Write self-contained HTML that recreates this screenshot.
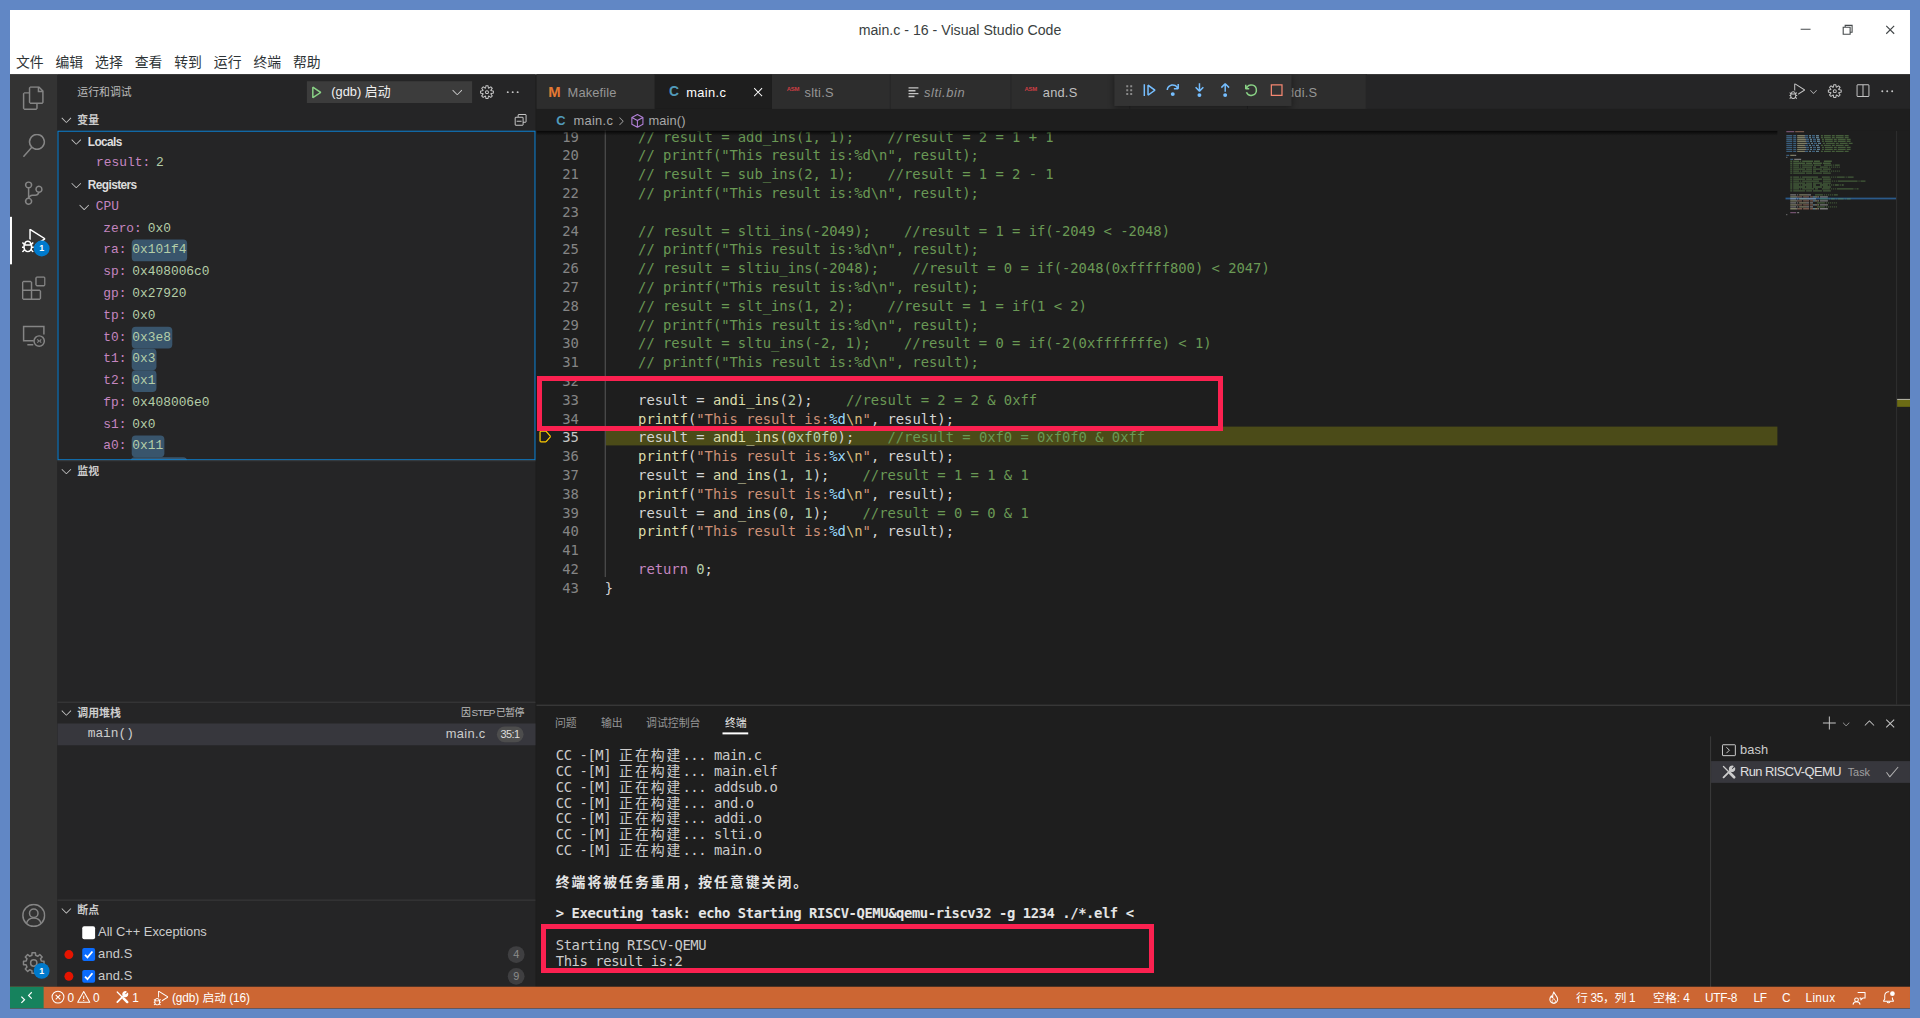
<!DOCTYPE html>
<html lang="zh-CN">
<head>
<meta charset="utf-8">
<title>main.c - 16 - Visual Studio Code</title>
<style>
*{box-sizing:border-box;margin:0;padding:0}
html,body{width:1920px;height:1018px;overflow:hidden;background:#6187c5}
body{position:relative;font-family:"Liberation Sans","Noto Sans CJK SC",sans-serif;font-size:13px;color:#ccc}
#win{position:absolute;left:10px;top:10px;width:1920px;height:1008.5px;transform:scale(0.989583);transform-origin:0 0;overflow:hidden;background:#1e1e1e}
.abs{position:absolute}
svg{display:block}
.mono{font-family:"Liberation Mono","Noto Sans CJK SC",monospace}
.code{font-family:"DejaVu Sans Mono","Liberation Mono","Noto Sans CJK SC",monospace}
/* title + menu */
#titlebar{left:0;top:0;width:1920px;height:65px;background:#fff;color:#2e3436}
#title{left:0;width:1920px;top:10px;height:20px;line-height:20px;text-align:center;font-size:14.3px;color:#3a3f41}
.menu{top:42px;height:22px;line-height:22px;font-size:14px;color:#2e3436;white-space:nowrap}
/* activity bar */
#activity{left:0;top:65px;width:48px;height:921.5px;background:#333}
/* sidebar */
#sidebar{left:48px;top:65px;width:483px;height:921.5px;background:#252526}
.phead{left:0;width:483px;height:22px;line-height:22px;font-size:11px;font-weight:bold;color:#ccc}
.phead .t{position:absolute;left:20px;top:0}
.row{left:0;width:483px;height:22px;line-height:22px;white-space:nowrap;font-size:13px}
.vn{color:#c586c0}
.vv{color:#b5cea8;margin-left:6px}
.chg{background:#39556c;border-radius:4px;padding:0 1px;margin-left:5px;display:inline-block;height:22px}
/* editor */
#tabs{left:531.5px;top:65px;width:1388.5px;height:35px;background:#252526;overflow:hidden}
.tab{top:0;height:35px;line-height:37px;background:#2d2d2d;color:#969696;font-size:13px;white-space:nowrap;border-right:1px solid #252526}
#crumbs{left:531.5px;top:100px;width:1388.5px;height:22px;background:#1e1e1e;line-height:23.5px;font-size:13px;color:#a9a9a9}
#editor{left:531.5px;top:122px;width:1388.5px;height:580px;background:#1e1e1e;overflow:hidden}
.ln{left:0;width:43.3px;text-align:right;color:#858585;height:19px;line-height:19px;font-size:14px}
.cl{left:69.6px;height:19px;line-height:19px;font-size:14px;white-space:pre;color:#d4d4d4;letter-spacing:-0.03px}
.c{color:#6a9955}.f{color:#dcdcaa}.s{color:#ce9178}.n{color:#b5cea8}.k{color:#c586c0}.e{color:#d7ba7d}.p{color:#9cdcfe}
/* panel */
#panel{left:531.5px;top:702px;width:1388.5px;height:284.5px;background:#1e1e1e;border-top:1px solid #454545}
.ptab{top:7px;height:22px;line-height:22px;font-size:11px;color:#969696;white-space:nowrap}
.tl{left:20px;height:16px;line-height:16px;font-size:14px;white-space:pre;color:#ccc;letter-spacing:-0.43px}
.tl b{color:#e5e5e5}
.cj{letter-spacing:2px}
/* status */
#status{left:0;top:986.5px;width:1920px;height:22px;background:#cc6633;color:#fff;font-size:12px;line-height:22px;white-space:nowrap}
.redbox{position:absolute;border:5px solid #fb2150}
</style>
</head>
<body>
<div id="win">
<div id="titlebar" class="abs">
  <div id="title" class="abs">main.c - 16 - Visual Studio Code</div>
  <svg class="abs" style="left:1808px;top:13px" width="14" height="14" viewBox="0 0 14 14"><path d="M1.5 6.5h10" stroke="#45494b" stroke-width="1.1" fill="none"/></svg>
  <svg class="abs" style="left:1850px;top:13px" width="14" height="14" viewBox="0 0 14 14"><path d="M2.5 4.5h7v7h-7z M4.5 4.5v-2h7v7h-2" stroke="#45494b" stroke-width="1.1" fill="none"/></svg>
  <svg class="abs" style="left:1893px;top:13px" width="14" height="14" viewBox="0 0 14 14"><path d="M3 3l8 8M11 3l-8 8" stroke="#45494b" stroke-width="1.2" fill="none"/></svg>
  <div class="menu abs" style="left:6px">文件</div>
  <div class="menu abs" style="left:46px">编辑</div>
  <div class="menu abs" style="left:86px">选择</div>
  <div class="menu abs" style="left:126px">查看</div>
  <div class="menu abs" style="left:166px">转到</div>
  <div class="menu abs" style="left:206px">运行</div>
  <div class="menu abs" style="left:246px">终端</div>
  <div class="menu abs" style="left:286px">帮助</div>
</div>

<div id="activity" class="abs">
  <!-- files -->
  <svg class="abs" style="left:12px;top:12px" width="24" height="24" viewBox="0 0 24 24" fill="#858585"><path d="M17.5 0h-9L7 1.5V6H2.5L1 7.5v15.07L2.5 24h12.07L16 22.57V18h4.7l1.3-1.43V4.5L17.5 0zm0 2.12l2.38 2.38H17.5V2.12zm-3 20.38h-12v-15H7v9.07L8.5 18h6v4.5zm6-6h-12v-15H16V6h4.5v10.5z"/></svg>
  <!-- search -->
  <svg class="abs" style="left:12px;top:60px" width="24" height="24" viewBox="0 0 24 24" fill="#858585"><path d="M15.25 0a8.25 8.25 0 0 0-6.18 13.72L1 22.88l1.12 1 8.05-9.12A8.251 8.251 0 1 0 15.25.01V0zm0 15a6.75 6.75 0 1 1 0-13.5 6.75 6.75 0 0 1 0 13.5z"/></svg>
  <!-- scm -->
  <svg class="abs" style="left:12px;top:108px" width="24" height="24" viewBox="0 0 24 24" fill="#858585"><path d="M21.007 8.222A3.738 3.738 0 0 0 15.045 5.2a3.737 3.737 0 0 0 1.156 6.583 2.988 2.988 0 0 1-2.668 1.67h-2.99a4.456 4.456 0 0 0-2.989 1.165V7.4a3.737 3.737 0 1 0-1.494 0v9.117a3.776 3.776 0 1 0 1.816.099 2.99 2.99 0 0 1 2.668-1.667h2.99a4.484 4.484 0 0 0 4.223-3.039 3.736 3.736 0 0 0 3.25-3.687zM4.565 3.738a2.242 2.242 0 1 1 4.484 0 2.242 2.242 0 0 1-4.484 0zm4.484 16.441a2.242 2.242 0 1 1-4.484 0 2.242 2.242 0 0 1 4.484 0zm8.221-9.715a2.242 2.242 0 1 1 0-4.485 2.242 2.242 0 0 1 0 4.485z"/></svg>
  <!-- debug (active) -->
  <div class="abs" style="left:0;top:144px;width:2px;height:48px;background:#fff"></div>
  <svg class="abs" style="left:12px;top:156px" width="24" height="24" viewBox="0 0 24 24" fill="#fff"><path d="M10.94 13.5l-1.32 1.32a3.73 3.73 0 0 0-7.24 0L1.06 13.5 0 14.56l1.72 1.72-.22.22V18H0v1.5h1.5v.08c.077.489.214.966.41 1.42L0 22.94 1.06 24l1.65-1.65A4.308 4.308 0 0 0 6 24a4.31 4.31 0 0 0 3.29-1.65L10.94 24 12 22.94 10.09 21c.198-.464.336-.951.41-1.45v-.1H12V18h-1.5v-1.5l-.22-.22L12 14.56l-1.06-1.06zM6 13.5a2.25 2.25 0 0 1 2.25 2.25h-4.5A2.25 2.25 0 0 1 6 13.5zm3 6a3.33 3.33 0 0 1-3 3 3.33 3.33 0 0 1-3-3v-2.25h6v2.25zm14.76-9.9v1.26L13.5 17.37V15.6l8.5-5.37L9 2v9.46a5.07 5.07 0 0 0-1.5-.72V.63L8.64 0l15.12 9.6z"/></svg>
  <div class="abs" style="left:24px;top:168px;width:16px;height:16px;border-radius:8px;background:#007acc;color:#fff;font-size:9px;font-weight:bold;line-height:16px;text-align:center">1</div>
  <!-- extensions -->
  <svg class="abs" style="left:12px;top:204px" width="24" height="24" viewBox="0 0 24 24" fill="#858585"><path d="M13.5 1.5L15 0h7.5L24 1.5V9l-1.5 1.5H15L13.5 9V1.5zm1.5 0V9h7.5V1.5H15zM0 15V6l1.5-1.5H9L10.500 6v7.5H18l1.500 1.500v7.500L18 24H1.500L0 22.500V15zm9-1.500V6H1.500v7.500H9zM9 15H1.500v7.500H9V15zm1.500 7.500H18V15h-7.500v7.500z"/></svg>
  <!-- remote explorer -->
  <svg class="abs" style="left:12px;top:252px" width="24" height="24" viewBox="0 0 24 24" fill="none" stroke="#858585" stroke-width="1.5"><path d="M12 17.25H1.75V2.75h20.5V11"/><path d="M5.5 21.25h6" /><circle cx="17.5" cy="17.5" r="5.2"/><path d="M15.6 15.8l1.6 1.7-1.6 1.7M19.6 15.8l-1.6 1.7 1.600 1.700" stroke-width="1.1"/></svg>
  <!-- account -->
  <svg class="abs" style="left:12px;top:837.5px" width="24" height="24" viewBox="0 0 24 24" fill="none" stroke="#858585" stroke-width="1.5"><circle cx="12" cy="12" r="11"/><circle cx="12" cy="9.8" r="4.3"/><path d="M4.6 20.200c.9-3.600 3.800-5.700 7.400-5.700s6.500 2.100 7.400 5.700"/></svg>
  <!-- gear -->
  <svg class="abs" style="left:12px;top:885.5px" width="24" height="24" viewBox="0 0 24 24" fill="none" stroke="#858585" stroke-width="1.5" stroke-linejoin="round"><path d="M19.78 10.13 L22.36 10.28 L22.36 13.72 L19.78 13.87 L18.82 16.18 L20.54 18.10 L18.10 20.54 L16.18 18.82 L13.87 19.78 L13.72 22.36 L10.28 22.36 L10.13 19.78 L7.82 18.82 L5.90 20.54 L3.46 18.10 L5.18 16.18 L4.22 13.87 L1.64 13.72 L1.64 10.28 L4.22 10.13 L5.18 7.82 L3.46 5.90 L5.90 3.46 L7.82 5.18 L10.13 4.22 L10.28 1.64 L13.72 1.64 L13.87 4.22 L16.18 5.18 L18.10 3.46 L20.54 5.90 L18.82 7.82Z"/><circle cx="12" cy="12" r="3.2"/></svg>
  <div class="abs" style="left:24px;top:897.5px;width:16px;height:16px;border-radius:8px;background:#007acc;color:#fff;font-size:9px;font-weight:bold;line-height:16px;text-align:center">1</div>
</div>

<div id="sidebar" class="abs">
<div class="abs" style="left:20px;top:0;height:35px;line-height:37px;font-size:11px;color:#bbb;white-space:nowrap">运行和调试</div>
<div class="abs" style="left:251.8px;top:7px;width:167px;height:22px;background:#3c3c3c"></div>
<svg class="abs" style="left:253px;top:10px" width="16" height="16" viewBox="0 0 16 16" fill="#89d185"><path d="M4.250 3l1.166-.624 8 5.333v1.248l-8 5.334-1.166-.624V3zm1.500 1.401v7.864l5.898-3.932L5.750 4.401z"/></svg>
<div class="abs" style="left:276.6px;top:7px;height:22px;line-height:22px;font-size:13px;color:#f0f0f0;white-space:nowrap;letter-spacing:0px">(gdb) 启动</div>
<svg class="abs" style="left:395.7px;top:10px" width="16" height="16" viewBox="0 0 16 16" fill="#ccc"><path d="M7.976 10.072l4.357-4.357.62.618L8.284 11h-.618L3 6.333l.619-.618 4.357 4.357z"/></svg>
<svg class="abs" style="left:426px;top:10px" width="16" height="16" viewBox="0 0 16 16" fill="#c5c5c5"><path fill-rule="evenodd" d="M9.100 4.400L8.600 2H7.400l-.500 2.400-.700.300-2-1.300-.900.800 1.300 2-.200.700-2.400.500v1.200l2.400.500.300.800-1.300 2 .800.800 2-1.300.800.300.400 2.300h1.200l.500-2.400.800-.300 2 1.300.800-.800-1.300-2 .300-.800 2.300-.400V7.400l-2.400-.500-.300-.800 1.300-2-.800-.800-2 1.300-.700-.200zM9.400 1l.500 2.400L12 2.100l2 2-1.400 2.100 2.400.400v2.800l-2.400.500L14 12l-2 2-2.100-1.400-.500 2.400H6.600l-.500-2.400L4 13.900l-2-2 1.400-2.100L1 9.400V6.600l2.400-.500L2.100 4l2-2 2.100 1.400.400-2.400h2.800zm.600 7c0 1.100-.900 2-2 2s-2-.900-2-2 .900-2 2-2 2 .900 2 2zM8 9c.600 0 1-.400 1-1s-.400-1-1-1-1 .400-1 1 .400 1 1 1z"/></svg>
<svg class="abs" style="left:452.3px;top:10px" width="16" height="16" viewBox="0 0 16 16" fill="#c5c5c5"><path d="M4 8a1 1 0 1 1-2 0 1 1 0 0 1 2 0zm5 0a1 1 0 1 1-2 0 1 1 0 0 1 2 0zm5 0a1 1 0 1 1-2 0 1 1 0 0 1 2 0z"/></svg>
<div class="phead abs" style="top:35px"><svg class="abs" style="left:0.6px;top:3px" width="16" height="16" viewBox="0 0 16 16" fill="#c5c5c5"><path d="M7.976 10.072l4.357-4.357.62.618L8.284 11h-.618L3 6.333l.619-.618 4.357 4.357z"/></svg><span class="t">变量</span></div>
<svg class="abs" style="left:460.4px;top:38px" width="16" height="16" viewBox="0 0 16 16" fill="#c5c5c5"><path d="M9 9H4v1h5V9z"/><path fill-rule="evenodd" d="M5 3l1-1h7l1 1v7l-1 1h-2v2l-1 1H3l-1-1V6l1-1h2V3zm1 2h4l1 1v4h2V3H6v2zm4 1H3v7h7V6z"/></svg>
<div class="abs" style="left:0;top:57px;width:483px;height:332.5px;overflow:hidden">
<div class="row abs" style="top:0px"><svg class="abs" style="left:10.7px;top:3px" width="16" height="16" viewBox="0 0 16 16" fill="#c5c5c5"><path d="M7.976 10.072l4.357-4.357.62.618L8.284 11h-.618L3 6.333l.619-.618 4.357 4.357z"/></svg><b class="abs" style="left:30.6px;color:#ddd;font-size:12px;letter-spacing:-0.6px">Locals</b></div>
<div class="row abs mono" style="top:22px"><span class="abs" style="left:39.0px"><span class="vn">result:</span><span class="vv">2</span></span></div>
<div class="row abs" style="top:44px"><svg class="abs" style="left:10.7px;top:3px" width="16" height="16" viewBox="0 0 16 16" fill="#c5c5c5"><path d="M7.976 10.072l4.357-4.357.62.618L8.284 11h-.618L3 6.333l.619-.618 4.357 4.357z"/></svg><b class="abs" style="left:30.6px;color:#ddd;font-size:12px;letter-spacing:-0.6px">Registers</b></div>
<div class="row abs mono" style="top:66px"><svg class="abs" style="left:18.8px;top:3px" width="16" height="16" viewBox="0 0 16 16" fill="#c5c5c5"><path d="M7.976 10.072l4.357-4.357.62.618L8.284 11h-.618L3 6.333l.619-.618 4.357 4.357z"/></svg><span class="abs vn" style="left:38.6px">CPU</span></div>
<div class="row abs mono" style="top:88px"><span class="abs" style="left:46.2px"><span class="vn">zero:</span><span class="vv">0x0</span></span></div>
<div class="row abs mono" style="top:110px"><span class="abs" style="left:46.2px"><span class="vn">ra:</span><span class="vv chg">0x101f4</span></span></div>
<div class="row abs mono" style="top:132px"><span class="abs" style="left:46.2px"><span class="vn">sp:</span><span class="vv">0x408006c0</span></span></div>
<div class="row abs mono" style="top:154px"><span class="abs" style="left:46.2px"><span class="vn">gp:</span><span class="vv">0x27920</span></span></div>
<div class="row abs mono" style="top:176px"><span class="abs" style="left:46.2px"><span class="vn">tp:</span><span class="vv">0x0</span></span></div>
<div class="row abs mono" style="top:198px"><span class="abs" style="left:46.2px"><span class="vn">t0:</span><span class="vv chg">0x3e8</span></span></div>
<div class="row abs mono" style="top:220px"><span class="abs" style="left:46.2px"><span class="vn">t1:</span><span class="vv chg">0x3</span></span></div>
<div class="row abs mono" style="top:242px"><span class="abs" style="left:46.2px"><span class="vn">t2:</span><span class="vv chg">0x1</span></span></div>
<div class="row abs mono" style="top:264px"><span class="abs" style="left:46.2px"><span class="vn">fp:</span><span class="vv">0x408006e0</span></span></div>
<div class="row abs mono" style="top:286px"><span class="abs" style="left:46.2px"><span class="vn">s1:</span><span class="vv">0x0</span></span></div>
<div class="row abs mono" style="top:308px"><span class="abs" style="left:46.2px"><span class="vn">a0:</span><span class="vv chg">0x11</span></span></div>
<div class="abs" style="left:74.4px;top:330px;width:56.6px;height:22px;border-radius:4px;background:#39556c"></div>
</div>
<div class="abs" style="left:0;top:57px;width:483px;height:332.5px;border:1.4px solid #0a84d8"></div>
<div class="phead abs" style="top:390px;border-top:1px solid #3c3c3c"><svg class="abs" style="left:0.6px;top:2px" width="16" height="16" viewBox="0 0 16 16" fill="#c5c5c5"><path d="M7.976 10.072l4.357-4.357.62.618L8.284 11h-.618L3 6.333l.619-.618 4.357 4.357z"/></svg><span class="t" style="top:-1px">监视</span></div>
<div class="phead abs" style="top:634px;border-top:1px solid #3c3c3c"><svg class="abs" style="left:0.6px;top:2px" width="16" height="16" viewBox="0 0 16 16" fill="#c5c5c5"><path d="M7.976 10.072l4.357-4.357.62.618L8.284 11h-.618L3 6.333l.619-.618 4.357 4.357z"/></svg><span class="t" style="top:-1px">调用堆栈</span><span class="abs" style="right:12px;top:-1px;font-weight:normal;font-size:10px;color:#bbb;letter-spacing:-0.7px;word-spacing:-0.6px">因 STEP 已暂停</span></div>
<div class="row abs" style="top:656px;background:#37373d"><span class="abs mono" style="left:30.5px;color:#ccc">main()</span><span class="abs" style="right:50.5px;color:#ccc;letter-spacing:0.3px">main.c</span><span class="abs" style="right:12px;top:3px;height:16px;line-height:16px;padding:0 4px;border-radius:8px;background:#4d4d4d;color:#ddd;font-size:11px;letter-spacing:-0.5px">35:1</span></div>
<div class="phead abs" style="top:834px;border-top:1px solid #3c3c3c"><svg class="abs" style="left:0.6px;top:2px" width="16" height="16" viewBox="0 0 16 16" fill="#c5c5c5"><path d="M7.976 10.072l4.357-4.357.62.618L8.284 11h-.618L3 6.333l.619-.618 4.357 4.357z"/></svg><span class="t" style="top:-1px">断点</span></div>
<div class="row abs" style="top:856px"><div class="abs" style="left:25px;top:4.5px;width:13px;height:13px;border-radius:2px;background:#fff"></div><span class="abs" style="left:41px;color:#ccc;letter-spacing:0px">All C++ Exceptions</span></div>
<div class="row abs" style="top:878px"><div class="abs" style="left:7px;top:6.5px;width:9px;height:9px;border-radius:5px;background:#e51400"></div><div class="abs" style="left:25px;top:4.5px;width:13px;height:13px;border-radius:2px;background:#0a6cff"></div><svg class="abs" style="left:25px;top:4.5px" width="13" height="13" viewBox="0 0 13 13" fill="none" stroke="#fff" stroke-width="1.8"><path d="M2.800 6.800l2.500 2.600 5-6"/></svg><span class="abs" style="left:41px;color:#ccc;letter-spacing:0.15px">and.S</span><span class="abs" style="right:11px;top:3px;width:17px;height:17px;line-height:17px;border-radius:9px;background:#3f3f41;color:#8c8c8c;font-size:11px;text-align:center">4</span></div>
<div class="row abs" style="top:900px"><div class="abs" style="left:7px;top:6.5px;width:9px;height:9px;border-radius:5px;background:#e51400"></div><div class="abs" style="left:25px;top:4.5px;width:13px;height:13px;border-radius:2px;background:#0a6cff"></div><svg class="abs" style="left:25px;top:4.5px" width="13" height="13" viewBox="0 0 13 13" fill="none" stroke="#fff" stroke-width="1.8"><path d="M2.800 6.800l2.500 2.600 5-6"/></svg><span class="abs" style="left:41px;color:#ccc;letter-spacing:0.15px">and.S</span><span class="abs" style="right:11px;top:3px;width:17px;height:17px;line-height:17px;border-radius:9px;background:#3f3f41;color:#8c8c8c;font-size:11px;text-align:center">9</span></div>
</div>
<div id="tabs" class="abs">
<div class="tab abs" style="left:0;width:120px"><span class="abs" style="left:12.5px;top:-1px;font-weight:bold;font-size:15px;color:#e37933">M</span><span class="abs" style="left:31.9px;letter-spacing:0.15px">Makefile</span></div>
<div class="tab abs" style="left:120px;width:118.2px;background:#1e1e1e;color:#fff;border-right:0"><span class="abs" style="left:14.5px;top:-1px;font-weight:bold;font-size:14px;color:#519aba">C</span><span class="abs" style="left:31.9px;letter-spacing:0.35px">main.c</span><svg class="abs" style="left:96.4px;top:9.5px" width="16" height="16" viewBox="0 0 16 16" fill="#fff" ><path d="M8 8.707l3.646 3.647.708-.707L8.707 8l3.647-3.646-.707-.708L8 7.293 4.354 3.646l-.707.708L7.293 8l-3.646 3.646.707.708L8 8.707z"/></svg></div>
<div class="tab abs" style="left:238.2px;width:120.6px"><span class="abs" style="left:13.5px;top:0;width:16px;text-align:center;font-size:6px;font-weight:bold;color:#cc3e44;letter-spacing:-0.3px;line-height:30px">ASM</span><span class="abs" style="left:33.3px;letter-spacing:0.2px">slti.S</span></div>
<div class="tab abs" style="left:358.8px;width:121.7px"><svg class="abs" style="left:16.5px;top:11.5px" width="12" height="12" viewBox="0 0 12 12" stroke="#c5c5c5" stroke-width="1.3" fill="none"><path d="M1 1.700h10M1 4.600h7M1 7.500h10M1 10.400h6"/></svg><span class="abs" style="left:33.3px;font-style:italic;letter-spacing:0.6px">slti.bin</span></div>
<div class="tab abs" style="left:480.5px;width:119.8px;color:#c0c0c0"><span class="abs" style="left:11.5px;top:0;width:16px;text-align:center;font-size:6px;font-weight:bold;color:#cc3e44;letter-spacing:-0.3px;line-height:30px">ASM</span><span class="abs" style="left:31.7px;letter-spacing:0.2px">and.S</span></div>
<div class="tab abs" style="left:600.3px;width:119.2px"></div>
<div class="tab abs" style="left:719.5px;width:119.8px"><span class="abs" style="left:12px;top:0;width:16px;text-align:center;font-size:6px;font-weight:bold;color:#cc3e44;letter-spacing:-0.3px;line-height:30px">ASM</span><span class="abs" style="left:32px;letter-spacing:0.2px">addi.S</span></div>
<div class="abs" style="left:584.5px;top:0;width:179px;height:32px;background:#333;box-shadow:0 2px 6px rgba(0,0,0,.4)">
<svg class="abs" style="left:6.800000000000001px;top:8px" width="16" height="16" viewBox="0 0 16 16" fill="#8a8a8a" ><path d="M5 3h2v2H5zm0 4h2v2H5zm0 4h2v2H5zm4-8h2v2H9zm0 4h2v2H9zm0 4h2v2H9z"/></svg>
<svg class="abs" style="left:26.5px;top:8px" width="16" height="16" viewBox="0 0 16 16" fill="#75beff" ><path d="M2.500 2H4v12H2.500V2zm4.936.390L6.250 3v10l1.186.610 7-5V7.390l-7-5zM12.710 8l-4.960 3.540V4.460L12.710 8z"/></svg>
<svg class="abs" style="left:51.2px;top:8px" width="16" height="16" viewBox="0 0 16 16" fill="#75beff" ><path d="M14.250 5.750v-4h-1.500v2.542c-1.145-1.359-2.911-2.209-4.840-2.209-3.177 0-5.920 2.307-6.160 5.398l-.020.269h1.501l.022-.226c.212-2.195 2.202-3.940 4.656-3.940 1.736 0 3.244.875 4.050 2.166h-2.830v1.500h4.163l.962-.975V5.750h-.004zM8 14a2 2 0 1 0 0-4 2 2 0 0 0 0 4z"/></svg>
<svg class="abs" style="left:77.5px;top:8px" width="16" height="16" viewBox="0 0 16 16" fill="#75beff" ><path d="M8 9.532h.542l3.905-3.905-1.061-1.060-2.637 2.610V1H7.251v6.177l-2.637-2.610-1.061 1.060 3.905 3.905H8zm1.956 3.481a2 2 0 1 1-4 0 2 2 0 0 1 4 0z"/></svg>
<svg class="abs" style="left:103.8px;top:8px" width="16" height="16" viewBox="0 0 16 16" fill="#75beff" ><path d="M8 1h-.542L3.553 4.905l1.061 1.060 2.637-2.610v6.177h1.498V3.355l2.637 2.610 1.061-1.060L8.542 1H8zm1.956 12.013a2 2 0 1 1-4 0 2 2 0 0 1 4 0z"/></svg>
<svg class="abs" style="left:129.6px;top:8px" width="16" height="16" viewBox="0 0 16 16" fill="#89d185" ><path d="M12.750 8a4.500 4.500 0 0 1-8.610 1.834l-1.391.565A6.001 6.001 0 0 0 14.250 8 6 6 0 0 0 3.500 4.334V2.500H2v4l.750.750h3.500v-1.500H4.352A4.500 4.500 0 0 1 12.750 8z"/></svg>
<svg class="abs" style="left:155.8px;top:8px" width="16" height="16" viewBox="0 0 16 16" fill="#f48771" ><path d="M2 2v12h12V2H2zm10.750 10.750h-9.500v-9.500h9.500v9.500z"/></svg>
</div>
<svg class="abs" style="left:1266.300px;top:9px" width="16" height="16" viewBox="0 0 24 24" fill="#c5c5c5"><path d="M10.940 13.500l-1.320 1.320a3.730 3.730 0 0 0-7.240 0L1.060 13.500 0 14.560l1.720 1.720-.220.220V18H0v1.500h1.500v.080c.077.489.214.966.410 1.420L0 22.940 1.060 24l1.650-1.650A4.308 4.308 0 0 0 6 24a4.310 4.310 0 0 0 3.290-1.650L10.940 24 12 22.940 10.090 21c.198-.464.336-.951.410-1.450v-.100H12V18h-1.500v-1.500l-.220-.220L12 14.560l-1.060-1.060zM6 13.500a2.250 2.250 0 0 1 2.250 2.250h-4.500A2.250 2.250 0 0 1 6 13.500zm3 6a3.330 3.330 0 0 1-3 3 3.330 3.330 0 0 1-3-3v-2.250h6v2.250zm14.760-9.900v1.260L13.500 17.370V15.600l8.500-5.370L9 2v9.460a5.070 5.070 0 0 0-1.500-.720V.630L8.640 0l15.120 9.600z"/></svg>
<svg class="abs" style="left:1285px;top:11.500px" width="11" height="11" viewBox="0 0 16 16" fill="#c5c5c5"><path d="M7.976 10.072l4.357-4.357.62.618L8.284 11h-.618L3 6.333l.619-.618 4.357 4.357z"/></svg>
<svg class="abs" style="left:1304.7px;top:9px" width="16" height="16" viewBox="0 0 16 16" fill="#c5c5c5" fill-rule="evenodd"><path d="M9.100 4.400L8.600 2H7.400l-.500 2.400-.700.300-2-1.300-.900.800 1.300 2-.200.700-2.400.500v1.200l2.400.500.300.800-1.300 2 .800.800 2-1.300.800.300.400 2.300h1.200l.500-2.400.800-.300 2 1.300.800-.800-1.300-2 .300-.800 2.300-.400V7.400l-2.400-.500-.300-.800 1.300-2-.800-.800-2 1.300-.700-.200zM9.400 1l.500 2.400L12 2.100l2 2-1.400 2.100 2.400.400v2.800l-2.400.500L14 12l-2 2-2.100-1.400-.500 2.400H6.600l-.500-2.400L4 13.900l-2-2 1.400-2.100L1 9.400V6.600l2.400-.500L2.100 4l2-2 2.100 1.400.400-2.400h2.800zm.600 7c0 1.100-.900 2-2 2s-2-.900-2-2 .900-2 2-2 2 .900 2 2zM8 9c.600 0 1-.400 1-1s-.400-1-1-1-1 .400-1 1 .400 1 1 1z"/></svg>
<svg class="abs" style="left:1332px;top:9px" width="16" height="16" viewBox="0 0 16 16" fill="#c5c5c5" ><path d="M14 1H3L2 2v11l1 1h11l1-1V2l-1-1zM8 13H3V2h5v11zm6 0H9V2h5v11z"/></svg>
<svg class="abs" style="left:1357.3px;top:9px" width="16" height="16" viewBox="0 0 16 16" fill="#c5c5c5" ><path d="M4 8a1 1 0 1 1-2 0 1 1 0 0 1 2 0zm5 0a1 1 0 1 1-2 0 1 1 0 0 1 2 0zm5 0a1 1 0 1 1-2 0 1 1 0 0 1 2 0z"/></svg>
</div>
<div id="crumbs" class="abs">
<span class="abs" style="left:20.5px;top:0;font-weight:bold;font-size:13px;color:#519aba">C</span>
<span class="abs" style="left:37.9px;letter-spacing:0.3px">main.c</span>
<svg class="abs" style="left:79.5px;top:5.5px" width="13" height="13" viewBox="0 0 16 16" fill="#a9a9a9"><path d="M10.072 8.024L5.715 3.667l.618-.62L11 7.716v.618L6.333 13l-.618-.619 4.357-4.357z"/></svg>
<svg class="abs" style="left:94.8px;top:4.3px" width="16" height="16" viewBox="0 0 16 16" fill="none" stroke="#b180d7" stroke-width="1.1" stroke-linejoin="round"><path d="M8 1.600l5.600 3v6.800L8 14.400l-5.600-3V4.600z M2.400 4.600L8 7.700l5.600-3.100M8 7.700v6.700"/></svg>
<span class="abs" style="left:113.7px;letter-spacing:0.1px">main()</span>
</div>
<div id="editor" class="abs code">
<div class="abs" style="left:70px;top:299.4px;width:1184.6px;height:19px;background:#4b4b18"></div>
<div class="abs" style="left:69px;top:-4.6px;width:1px;height:456px;background:#585858"></div>
<div class="ln abs" style="top:-3.2px;color:#858585">19</div>
<div class="cl abs" style="top:-3.2px"><span class="c">    // result = add_ins(1, 1);    //result = 2 = 1 + 1</span></div>
<div class="ln abs" style="top:15.8px;color:#858585">20</div>
<div class="cl abs" style="top:15.8px"><span class="c">    // printf("This result is:%d\n", result);</span></div>
<div class="ln abs" style="top:34.8px;color:#858585">21</div>
<div class="cl abs" style="top:34.8px"><span class="c">    // result = sub_ins(2, 1);    //result = 1 = 2 - 1</span></div>
<div class="ln abs" style="top:53.8px;color:#858585">22</div>
<div class="cl abs" style="top:53.8px"><span class="c">    // printf("This result is:%d\n", result);</span></div>
<div class="ln abs" style="top:72.8px;color:#858585">23</div>
<div class="ln abs" style="top:91.8px;color:#858585">24</div>
<div class="cl abs" style="top:91.8px"><span class="c">    // result = slti_ins(-2049);    //result = 1 = if(-2049 &lt; -2048)</span></div>
<div class="ln abs" style="top:110.8px;color:#858585">25</div>
<div class="cl abs" style="top:110.8px"><span class="c">    // printf("This result is:%d\n", result);</span></div>
<div class="ln abs" style="top:129.8px;color:#858585">26</div>
<div class="cl abs" style="top:129.8px"><span class="c">    // result = sltiu_ins(-2048);    //result = 0 = if(-2048(0xfffff800) &lt; 2047)</span></div>
<div class="ln abs" style="top:148.8px;color:#858585">27</div>
<div class="cl abs" style="top:148.8px"><span class="c">    // printf("This result is:%d\n", result);</span></div>
<div class="ln abs" style="top:167.8px;color:#858585">28</div>
<div class="cl abs" style="top:167.8px"><span class="c">    // result = slt_ins(1, 2);    //result = 1 = if(1 &lt; 2)</span></div>
<div class="ln abs" style="top:186.8px;color:#858585">29</div>
<div class="cl abs" style="top:186.8px"><span class="c">    // printf("This result is:%d\n", result);</span></div>
<div class="ln abs" style="top:205.8px;color:#858585">30</div>
<div class="cl abs" style="top:205.8px"><span class="c">    // result = sltu_ins(-2, 1);    //result = 0 = if(-2(0xfffffffe) &lt; 1)</span></div>
<div class="ln abs" style="top:224.8px;color:#858585">31</div>
<div class="cl abs" style="top:224.8px"><span class="c">    // printf("This result is:%d\n", result);</span></div>
<div class="ln abs" style="top:243.8px;color:#858585">32</div>
<div class="ln abs" style="top:262.8px;color:#858585">33</div>
<div class="cl abs" style="top:262.8px">    result = <span class="f">andi_ins</span>(<span class="n">2</span>);    <span class="c">//result = 2 = 2 &amp; 0xff</span></div>
<div class="ln abs" style="top:281.8px;color:#858585">34</div>
<div class="cl abs" style="top:281.8px">    <span class="f">printf</span>(<span class="s">"This result is:</span><span class="p">%d</span><span class="e">\n</span><span class="s">"</span>, result);</div>
<div class="ln abs" style="top:300.8px;color:#c6c6c6">35</div>
<div class="cl abs" style="top:300.8px">    result = <span class="f">andi_ins</span>(<span class="n">0xf0f0</span>);    <span class="c">//result = 0xf0 = 0xf0f0 &amp; 0xff</span></div>
<div class="ln abs" style="top:319.8px;color:#858585">36</div>
<div class="cl abs" style="top:319.8px">    <span class="f">printf</span>(<span class="s">"This result is:</span><span class="p">%x</span><span class="e">\n</span><span class="s">"</span>, result);</div>
<div class="ln abs" style="top:338.8px;color:#858585">37</div>
<div class="cl abs" style="top:338.8px">    result = <span class="f">and_ins</span>(<span class="n">1</span>, <span class="n">1</span>);    <span class="c">//result = 1 = 1 &amp; 1</span></div>
<div class="ln abs" style="top:357.8px;color:#858585">38</div>
<div class="cl abs" style="top:357.8px">    <span class="f">printf</span>(<span class="s">"This result is:</span><span class="p">%d</span><span class="e">\n</span><span class="s">"</span>, result);</div>
<div class="ln abs" style="top:376.8px;color:#858585">39</div>
<div class="cl abs" style="top:376.8px">    result = <span class="f">and_ins</span>(<span class="n">0</span>, <span class="n">1</span>);    <span class="c">//result = 0 = 0 &amp; 1</span></div>
<div class="ln abs" style="top:395.8px;color:#858585">40</div>
<div class="cl abs" style="top:395.8px">    <span class="f">printf</span>(<span class="s">"This result is:</span><span class="p">%d</span><span class="e">\n</span><span class="s">"</span>, result);</div>
<div class="ln abs" style="top:414.8px;color:#858585">41</div>
<div class="ln abs" style="top:433.8px;color:#858585">42</div>
<div class="cl abs" style="top:433.8px">    <span class="k">return</span> <span class="n">0</span>;</div>
<div class="ln abs" style="top:452.8px;color:#858585">43</div>
<div class="cl abs" style="top:452.8px">}</div>
<svg class="abs" style="left:0.6px;top:301.4px" width="16" height="16" viewBox="0 0 16 16" fill="#ffcc00"><path d="M14.500 7.150l-4.260-4.740L9.310 2H4.250L3 3.250v9.500L4.250 14h5.060l.930-.410 4.260-4.740V7.150zm-5.190 5.600H4.250v-9.500h5.060l4.260 4.750-4.260 4.750z"/></svg>
<div class="abs" style="left:0;top:0;width:1254.6px;height:5px;background:linear-gradient(#000c,#0000)"></div>
<svg class="abs" style="left:1262px;top:0" width="112" height="100" viewBox="0 0 112 100">
<rect x="0" y="67.600" width="112.500" height="1.800" fill="#2b5a8a"/>
<path fill="#c586c0" fill-opacity="0.5" d="M1 0.2h8v1.300h-8zM5 82.2h6v1.300h-6z"/>
<path fill="#ce9178" fill-opacity="0.5" d="M10 0.2h9v1.300h-9zM12 66.2h5v1.300h-5zM18 66.2h6v1.300h-6zM25 66.2h3v1.300h-3zM32 66.2h1v1.300h-1zM12 70.2h5v1.300h-5zM18 70.2h6v1.300h-6zM25 70.2h3v1.300h-3zM32 70.2h1v1.300h-1zM12 74.2h5v1.300h-5zM18 74.2h6v1.300h-6zM25 74.2h3v1.300h-3zM32 74.2h1v1.300h-1zM12 78.2h5v1.300h-5zM18 78.2h6v1.300h-6zM25 78.2h3v1.300h-3zM32 78.2h1v1.300h-1z"/>
<path fill="#569cd6" fill-opacity="0.5" d="M1 4.2h6v1.300h-6zM8 4.2h3v1.300h-3zM20 4.2h3v1.300h-3zM27 4.2h3v1.300h-3zM1 6.2h6v1.300h-6zM8 6.2h3v1.300h-3zM20 6.2h3v1.300h-3zM27 6.2h3v1.300h-3zM1 8.2h6v1.300h-6zM8 8.2h3v1.300h-3zM21 8.2h3v1.300h-3zM28 8.2h3v1.300h-3zM1 10.2h6v1.300h-6zM8 10.2h3v1.300h-3zM21 10.2h3v1.300h-3zM28 10.2h3v1.300h-3zM1 12.2h6v1.300h-6zM8 12.2h3v1.300h-3zM22 12.2h3v1.300h-3zM29 12.2h3v1.300h-3zM1 14.2h6v1.300h-6zM8 14.2h3v1.300h-3zM20 14.2h3v1.300h-3zM27 14.2h3v1.300h-3zM1 16.2h6v1.300h-6zM8 16.2h3v1.300h-3zM21 16.2h3v1.300h-3zM28 16.2h3v1.300h-3zM1 18.2h6v1.300h-6zM8 18.2h3v1.300h-3zM21 18.2h3v1.300h-3zM28 18.2h3v1.300h-3zM1 20.2h6v1.300h-6zM8 20.2h3v1.300h-3zM20 20.2h3v1.300h-3zM27 20.2h3v1.300h-3zM1 24.2h3v1.300h-3zM5 28.2h3v1.300h-3z"/>
<path fill="#dcdcaa" fill-opacity="0.5" d="M12 4.2h7v1.300h-7zM12 6.2h7v1.300h-7zM12 8.2h8v1.300h-8zM12 10.2h8v1.300h-8zM12 12.2h9v1.300h-9zM12 14.2h7v1.300h-7zM12 16.2h8v1.300h-8zM12 18.2h8v1.300h-8zM12 20.2h7v1.300h-7zM5 24.2h4v1.300h-4zM14 64.2h8v1.300h-8zM5 66.2h6v1.300h-6zM30 66.2h2v1.300h-2zM14 68.2h8v1.300h-8zM5 70.2h6v1.300h-6zM30 70.2h2v1.300h-2zM14 72.2h7v1.300h-7zM5 74.2h6v1.300h-6zM30 74.2h2v1.300h-2zM14 76.2h7v1.300h-7zM5 78.2h6v1.300h-6zM30 78.2h2v1.300h-2z"/>
<path fill="#d4d4d4" fill-opacity="0.5" d="M19 4.2h1v1.300h-1zM19 6.2h1v1.300h-1zM20 8.2h1v1.300h-1zM20 10.2h1v1.300h-1zM21 12.2h1v1.300h-1zM19 14.2h1v1.300h-1zM20 16.2h1v1.300h-1zM20 18.2h1v1.300h-1zM19 20.2h1v1.300h-1zM9 24.2h2v1.300h-2zM1 26.2h1v1.300h-1zM9 28.2h7v1.300h-7zM5 64.2h6v1.300h-6zM12 64.2h1v1.300h-1zM22 64.2h4v1.300h-4zM11 66.2h1v1.300h-1zM33 66.2h1v1.300h-1zM35 66.2h8v1.300h-8zM5 68.2h6v1.300h-6zM12 68.2h1v1.300h-1zM22 68.2h9v1.300h-9zM11 70.2h1v1.300h-1zM33 70.2h1v1.300h-1zM35 70.2h8v1.300h-8zM5 72.2h6v1.300h-6zM12 72.2h1v1.300h-1zM21 72.2h3v1.300h-3zM25 72.2h3v1.300h-3zM11 74.2h1v1.300h-1zM33 74.2h1v1.300h-1zM35 74.2h8v1.300h-8zM5 76.2h6v1.300h-6zM12 76.2h1v1.300h-1zM21 76.2h3v1.300h-3zM25 76.2h3v1.300h-3zM11 78.2h1v1.300h-1zM33 78.2h1v1.300h-1zM35 78.2h8v1.300h-8zM12 82.2h2v1.300h-2zM1 84.2h1v1.300h-1z"/>
<path fill="#9cdcfe" fill-opacity="0.5" d="M24 4.2h2v1.300h-2zM31 4.2h3v1.300h-3zM24 6.2h2v1.300h-2zM31 6.2h3v1.300h-3zM25 8.2h2v1.300h-2zM32 8.2h3v1.300h-3zM25 10.2h2v1.300h-2zM32 10.2h3v1.300h-3zM26 12.2h2v1.300h-2zM33 12.2h3v1.300h-3zM24 14.2h2v1.300h-2zM31 14.2h3v1.300h-3zM25 16.2h2v1.300h-2zM32 16.2h3v1.300h-3zM25 18.2h2v1.300h-2zM32 18.2h3v1.300h-3zM24 20.2h2v1.300h-2zM31 20.2h3v1.300h-3zM28 66.2h2v1.300h-2zM28 70.2h2v1.300h-2zM28 74.2h2v1.300h-2zM28 78.2h2v1.300h-2z"/>
<path fill="#6a9955" fill-opacity="0.5" d="M36 4.2h2v1.300h-2zM39 4.2h7v1.300h-7zM47 4.2h3v1.300h-3zM51 4.2h8v1.300h-8zM60 4.2h4v1.300h-4zM36 6.2h2v1.300h-2zM39 6.2h7v1.300h-7zM47 6.2h3v1.300h-3zM51 6.2h8v1.300h-8zM60 6.2h4v1.300h-4zM37 8.2h2v1.300h-2zM40 8.2h8v1.300h-8zM49 8.2h3v1.300h-3zM53 8.2h8v1.300h-8zM62 8.2h4v1.300h-4zM37 10.2h2v1.300h-2zM40 10.2h8v1.300h-8zM49 10.2h3v1.300h-3zM53 10.2h8v1.300h-8zM62 10.2h4v1.300h-4zM38 12.2h2v1.300h-2zM41 12.2h9v1.300h-9zM51 12.2h3v1.300h-3zM55 12.2h8v1.300h-8zM64 12.2h4v1.300h-4zM36 14.2h2v1.300h-2zM39 14.2h7v1.300h-7zM47 14.2h3v1.300h-3zM51 14.2h8v1.300h-8zM60 14.2h4v1.300h-4zM37 16.2h2v1.300h-2zM40 16.2h8v1.300h-8zM49 16.2h3v1.300h-3zM53 16.2h8v1.300h-8zM62 16.2h4v1.300h-4zM37 18.2h2v1.300h-2zM40 18.2h8v1.300h-8zM49 18.2h3v1.300h-3zM53 18.2h8v1.300h-8zM62 18.2h4v1.300h-4zM36 20.2h2v1.300h-2zM39 20.2h7v1.300h-7zM47 20.2h3v1.300h-3zM51 20.2h8v1.300h-8zM60 20.2h4v1.300h-4zM5 30.2h2v1.300h-2zM8 30.2h6v1.300h-6zM15 30.2h1v1.300h-1zM17 30.2h11v1.300h-11zM29 30.2h6v1.300h-6zM39 30.2h8v1.300h-8zM5 32.2h2v1.300h-2zM8 32.2h12v1.300h-12zM21 32.2h6v1.300h-6zM28 32.2h9v1.300h-9zM38 32.2h8v1.300h-8zM5 34.2h2v1.300h-2zM8 34.2h6v1.300h-6zM15 34.2h1v1.300h-1zM17 34.2h11v1.300h-11zM29 34.2h7v1.300h-7zM39 34.2h8v1.300h-8zM48 34.2h1v1.300h-1zM50 34.2h5v1.300h-5zM5 36.2h2v1.300h-2zM8 36.2h6v1.300h-6zM15 36.2h1v1.300h-1zM17 36.2h10v1.300h-10zM28 36.2h3v1.300h-3zM35 36.2h8v1.300h-8zM44 36.2h1v1.300h-1zM46 36.2h1v1.300h-1zM48 36.2h1v1.300h-1zM50 36.2h1v1.300h-1zM52 36.2h1v1.300h-1zM54 36.2h1v1.300h-1zM5 38.2h2v1.300h-2zM8 38.2h12v1.300h-12zM21 38.2h6v1.300h-6zM28 38.2h9v1.300h-9zM38 38.2h8v1.300h-8zM5 40.2h2v1.300h-2zM8 40.2h6v1.300h-6zM15 40.2h1v1.300h-1zM17 40.2h10v1.300h-10zM28 40.2h3v1.300h-3zM35 40.2h8v1.300h-8zM44 40.2h1v1.300h-1zM46 40.2h1v1.300h-1zM48 40.2h1v1.300h-1zM50 40.2h1v1.300h-1zM52 40.2h1v1.300h-1zM54 40.2h1v1.300h-1zM5 42.2h2v1.300h-2zM8 42.2h12v1.300h-12zM21 42.2h6v1.300h-6zM28 42.2h9v1.300h-9zM38 42.2h8v1.300h-8zM5 46.2h2v1.300h-2zM8 46.2h6v1.300h-6zM15 46.2h1v1.300h-1zM17 46.2h16v1.300h-16zM37 46.2h8v1.300h-8zM46 46.2h1v1.300h-1zM48 46.2h1v1.300h-1zM50 46.2h1v1.300h-1zM52 46.2h8v1.300h-8zM61 46.2h1v1.300h-1zM63 46.2h6v1.300h-6zM5 48.2h2v1.300h-2zM8 48.2h12v1.300h-12zM21 48.2h6v1.300h-6zM28 48.2h9v1.300h-9zM38 48.2h8v1.300h-8zM5 50.2h2v1.300h-2zM8 50.2h6v1.300h-6zM15 50.2h1v1.300h-1zM17 50.2h17v1.300h-17zM38 50.2h8v1.300h-8zM47 50.2h1v1.300h-1zM49 50.2h1v1.300h-1zM51 50.2h1v1.300h-1zM53 50.2h20v1.300h-20zM74 50.2h1v1.300h-1zM76 50.2h5v1.300h-5zM5 52.2h2v1.300h-2zM8 52.2h12v1.300h-12zM21 52.2h6v1.300h-6zM28 52.2h9v1.300h-9zM38 52.2h8v1.300h-8zM5 54.2h2v1.300h-2zM8 54.2h6v1.300h-6zM15 54.2h1v1.300h-1zM17 54.2h10v1.300h-10zM28 54.2h3v1.300h-3zM35 54.2h8v1.300h-8zM44 54.2h1v1.300h-1zM46 54.2h1v1.300h-1zM48 54.2h1v1.300h-1zM50 54.2h4v1.300h-4zM55 54.2h1v1.300h-1zM57 54.2h2v1.300h-2zM5 56.2h2v1.300h-2zM8 56.2h12v1.300h-12zM21 56.2h6v1.300h-6zM28 56.2h9v1.300h-9zM38 56.2h8v1.300h-8zM5 58.2h2v1.300h-2zM8 58.2h6v1.300h-6zM15 58.2h1v1.300h-1zM17 58.2h12v1.300h-12zM30 58.2h3v1.300h-3zM37 58.2h8v1.300h-8zM46 58.2h1v1.300h-1zM48 58.2h1v1.300h-1zM50 58.2h1v1.300h-1zM52 58.2h17v1.300h-17zM70 58.2h1v1.300h-1zM72 58.2h2v1.300h-2zM5 60.2h2v1.300h-2zM8 60.2h12v1.300h-12zM21 60.2h6v1.300h-6zM28 60.2h9v1.300h-9zM38 60.2h8v1.300h-8zM30 64.2h8v1.300h-8zM39 64.2h1v1.300h-1zM41 64.2h1v1.300h-1zM43 64.2h1v1.300h-1zM45 64.2h1v1.300h-1zM47 64.2h1v1.300h-1zM49 64.2h4v1.300h-4zM35 68.2h8v1.300h-8zM44 68.2h1v1.300h-1zM46 68.2h4v1.300h-4zM51 68.2h1v1.300h-1zM53 68.2h6v1.300h-6zM60 68.2h1v1.300h-1zM62 68.2h4v1.300h-4zM32 72.2h8v1.300h-8zM41 72.2h1v1.300h-1zM43 72.2h1v1.300h-1zM45 72.2h1v1.300h-1zM47 72.2h1v1.300h-1zM49 72.2h1v1.300h-1zM51 72.2h1v1.300h-1zM32 76.2h8v1.300h-8zM41 76.2h1v1.300h-1zM43 76.2h1v1.300h-1zM45 76.2h1v1.300h-1zM47 76.2h1v1.300h-1zM49 76.2h1v1.300h-1zM51 76.2h1v1.300h-1z"/>
</svg>
<div class="abs" style="left:1374.5px;top:0;width:14px;height:580px;border-left:1px solid #303030"></div>
<div class="abs" style="left:1375.5px;top:271.6px;width:13px;height:7.3px;background:#6b6b15"></div>
<div class="abs" style="left:1375.5px;top:270.6px;width:13px;height:1px;background:#c0c0b0"></div>
</div>
<div id="panel" class="abs">
<div class="ptab abs" style="left:19.2px;color:#969696">问题</div>
<div class="ptab abs" style="left:65.7px;color:#969696">输出</div>
<div class="ptab abs" style="left:111.2px;color:#969696">调试控制台</div>
<div class="ptab abs" style="left:191px;color:#e7e7e7">终端</div>
<div class="abs" style="left:188px;top:27.3px;width:26.3px;height:1.3px;background:#fff"></div>
<svg class="abs" style="left:1299.7px;top:9.5px" width="16" height="16" viewBox="0 0 16 16" fill="#c5c5c5" ><path d="M14 7v1H8v6H7V8H1V7h6V1h1v6h6z"/></svg>
<svg class="abs" style="left:1318.8px;top:12.5px" width="11" height="11" viewBox="0 0 16 16" fill="#c5c5c5"><path d="M7.976 10.072l4.357-4.357.62.618L8.284 11h-.618L3 6.333l.619-.618 4.357 4.357z"/></svg>
<svg class="abs" style="left:1339.1px;top:9.5px" width="16" height="16" viewBox="0 0 16 16" fill="#c5c5c5" ><path d="M8.024 5.928l-4.357 4.357-.62-.618L7.716 5h.618L13 9.667l-.619.618-4.357-4.357z"/></svg>
<svg class="abs" style="left:1360.8px;top:9.5px" width="16" height="16" viewBox="0 0 16 16" fill="#c5c5c5" ><path d="M8 8.707l3.646 3.647.708-.707L8.707 8l3.647-3.646-.707-.708L8 7.293 4.354 3.646l-.707.708L7.293 8l-3.646 3.646.707.708L8 8.707z"/></svg>
<div class="tl abs code" style="top:41.6px">CC -[M] <span class="cj">正在构建</span>... main.c</div>
<div class="tl abs code" style="top:57.6px">CC -[M] <span class="cj">正在构建</span>... main.elf</div>
<div class="tl abs code" style="top:73.6px">CC -[M] <span class="cj">正在构建</span>... addsub.o</div>
<div class="tl abs code" style="top:89.6px">CC -[M] <span class="cj">正在构建</span>... and.o</div>
<div class="tl abs code" style="top:105.6px">CC -[M] <span class="cj">正在构建</span>... addi.o</div>
<div class="tl abs code" style="top:121.6px">CC -[M] <span class="cj">正在构建</span>... slti.o</div>
<div class="tl abs code" style="top:137.6px">CC -[M] <span class="cj">正在构建</span>... main.o</div>
<div class="tl abs code" style="top:169.6px"><b><span class="cj">终端将被任务重用，按任意键关闭。</span></b></div>
<div class="tl abs code" style="top:201.6px"><b>&gt; Executing task: echo Starting RISCV-QEMU&amp;qemu-riscv32 -g 1234 ./*.elf &lt;</b></div>
<div class="tl abs code" style="top:233.6px">Starting RISCV-QEMU</div>
<div class="tl abs code" style="top:249.6px">This result is:2</div>
<div class="abs" style="left:1186.9px;top:30.5px;width:1px;height:254px;background:#3c3c3c"></div>
<div class="abs" style="left:1187.9px;top:55.5px;width:200.6px;height:22px;background:#37373d"></div>
<svg class="abs" style="left:1197px;top:36.5px" width="16" height="16" viewBox="0 0 16 16" fill="none" stroke="#ccc" stroke-width="1"><rect x="1.500" y="2.500" width="13" height="11" rx="0.5"/><path d="M5.500 5l3 3-3 3" /></svg>
<div class="abs" style="left:1216.7px;top:33.5px;height:22px;line-height:22px;font-size:13px;color:#ccc;letter-spacing:0.1px">bash</div>
<svg class="abs" style="left:1197px;top:58.5px" width="16" height="16" viewBox="0 0 16 16" fill="none" stroke="#ccc" stroke-linecap="round"><path d="M2.600 13.400l6.600-6.600" stroke-width="1.900"/><path d="M13.700 3.800a2.700 2.700 0 1 1-1.500-1.500l-1.700 1.700.300 1.200 1.200.300z" stroke-width="1.100" fill="#ccc" stroke-linejoin="round"/><path d="M2.500 2.500l4.800 4.800" stroke-width="1.300"/><path d="M9.300 9.300l4 4" stroke-width="2.700"/></svg>
<div class="abs" style="left:1216.7px;top:55.5px;height:22px;line-height:22px;font-size:13px;color:#e0e0e0;white-space:nowrap;letter-spacing:-0.55px">Run RISCV-QEMU</div>
<div class="abs" style="left:1325.5px;top:55.5px;height:22px;line-height:23px;font-size:11px;color:#a0a0a0;white-space:nowrap">Task</div>
<svg class="abs" style="left:1362.3px;top:58.5px" width="16" height="16" viewBox="0 0 16 16" fill="#b0b0b0" ><path d="M14.431 3.323l-8.470 10-.790-.036-3.350-4.770.818-.574 2.978 4.240 8.051-9.506.764.646z"/></svg>
</div>
<div id="status" class="abs">
<div class="abs" style="left:0;top:0;width:34px;height:22px;background:#16825d"></div>
<svg class="abs" style="left:9px;top:3px" width="16" height="16" viewBox="0 0 16 16" fill="none" stroke="#fff" stroke-width="1.2"><path d="M2.500 7l3.200 3.200-3.200 3.200M13 2.600L9.800 5.800 13 9"/></svg>
<svg class="abs" style="left:41px;top:3.500px" width="15" height="15" viewBox="0 0 16 16" fill="none" stroke="#fff" stroke-width="1.1"><circle cx="8" cy="8" r="6.400"/><path d="M5.500 5.500l5 5M10.500 5.500l-5 5"/></svg>
<span class="abs" style="left:58.2px;top:0;letter-spacing:0px">0</span>
<svg class="abs" style="left:67.300px;top:3.500px" width="15" height="15" viewBox="0 0 16 16" fill="none" stroke="#fff" stroke-width="1.1" stroke-linejoin="round"><path d="M8 2L14.500 13.500H1.500z"/><path d="M8 6.500v3.500M8 11.200v1.100"/></svg>
<span class="abs" style="left:84px;top:0;letter-spacing:0px">0</span>
<svg class="abs" style="left:105.7px;top:3.500px" width="15" height="15" viewBox="0 0 16 16" fill="none" stroke="#fff" stroke-linecap="round"><path d="M2.600 13.400l6.600-6.600" stroke-width="1.900"/><path d="M13.700 3.800a2.700 2.700 0 1 1-1.500-1.500l-1.700 1.700.300 1.200 1.200.300z" stroke-width="1.100" fill="#fff" stroke-linejoin="round"/><path d="M2.500 2.500l4.800 4.800" stroke-width="1.300"/><path d="M9.300 9.300l4 4" stroke-width="2.700"/></svg>
<span class="abs" style="left:123.6px;top:0;letter-spacing:0px">1</span>
<svg class="abs" style="left:144.6px;top:4px" width="15" height="15" viewBox="0 0 24 24" fill="#fff"><path d="M10.940 13.500l-1.320 1.320a3.730 3.730 0 0 0-7.240 0L1.060 13.500 0 14.560l1.720 1.720-.220.220V18H0v1.500h1.500v.080c.077.489.214.966.410 1.420L0 22.940 1.060 24l1.650-1.650A4.308 4.308 0 0 0 6 24a4.310 4.310 0 0 0 3.290-1.650L10.940 24 12 22.940 10.090 21c.198-.464.336-.951.410-1.450v-.100H12V18h-1.500v-1.500l-.220-.220L12 14.560l-1.060-1.060zM6 13.500a2.250 2.250 0 0 1 2.250 2.250h-4.500A2.250 2.250 0 0 1 6 13.500zm3 6a3.330 3.330 0 0 1-3 3 3.330 3.330 0 0 1-3-3v-2.250h6v2.250zm14.760-9.900v1.260L13.500 17.370V15.600l8.500-5.370L9 2v9.460a5.070 5.070 0 0 0-1.500-.720V.630L8.640 0l15.120 9.600z"/></svg>
<span class="abs" style="left:163.7px;top:0;letter-spacing:-0.1px">(gdb) 启动 (16)</span>
<svg class="abs" style="left:1552.700px;top:4px" width="14" height="14" viewBox="0 0 16 16" fill="none" stroke="#fff" stroke-width="1.200" stroke-linejoin="round"><path d="M8 1.500c.5 2.500 4.500 4.500 4.500 8.500a4.500 4.500 0 0 1-9 0c0-2 1-3 1.800-4 .200 1.200.800 2 1.500 2.300C6.500 6 7 3.500 8 1.500z"/><path d="M8 14.500c-1.200 0-2-1-2-2.200 0-1.300 1.200-1.800 2-3.300.8 1.500 2 2 2 3.300 0 1.200-.800 2.200-2 2.200z" stroke-width="1"/></svg>
<span class="abs" style="left:1582.5px;top:0;letter-spacing:-0.35px">行 35，列 1</span>
<span class="abs" style="left:1660.3px;top:0;letter-spacing:0px">空格: 4</span>
<span class="abs" style="left:1712.8px;top:0;letter-spacing:-0.3px">UTF-8</span>
<span class="abs" style="left:1761.9px;top:0;letter-spacing:-0.3px">LF</span>
<span class="abs" style="left:1790.7px;top:0;letter-spacing:0px">C</span>
<span class="abs" style="left:1814.4px;top:0;letter-spacing:0.3px">Linux</span>
<svg class="abs" style="left:1860.500px;top:4px" width="15" height="15" viewBox="0 0 16 16" fill="none" stroke="#fff" stroke-width="1.100" stroke-linejoin="round"><circle cx="5.300" cy="9.800" r="2"/><path d="M1.500 15c.3-2 1.800-3 3.800-3s3.500 1 3.800 3"/><path d="M6.500 2h8v6h-2.500l-2 2V8H8.500"/></svg>
<svg class="abs" style="left:1891.300px;top:3.500px" width="15" height="15" viewBox="0 0 16 16" fill="none" stroke="#fff" stroke-width="1.100" stroke-linejoin="round"><path d="M8.500 2.200A4.200 4.200 0 0 0 3.700 6.400V10L2.500 12v.500h10.500V12L12 10V8.500"/><path d="M6.300 12.700a1.500 1.500 0 0 0 3 0"/><circle cx="12" cy="4.300" r="2.500" fill="#fff" stroke="none"/></svg>
</div>
</div>
<div class="redbox" style="left:537px;top:375.6px;width:686.2px;height:55.9px"></div>
<div class="redbox" style="left:540.7px;top:923.7px;width:613.7px;height:49.3px"></div>
</body>
</html>
